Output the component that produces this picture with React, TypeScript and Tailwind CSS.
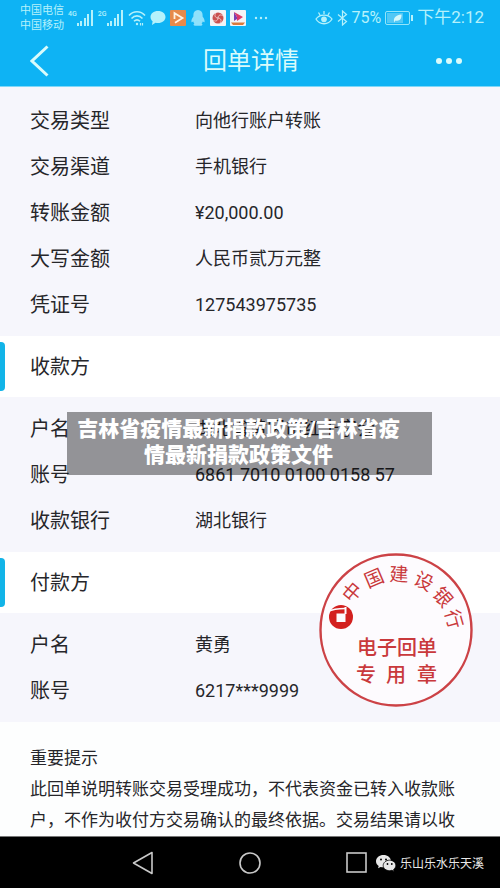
import React from "react"

interface Row {
  label: string
  value: string
}

interface SectionTitleProps {
  title: string
}

interface RowListProps {
  rows: Row[]
}

const transferRows: Row[] = [
  { label: "交易类型", value: "向他行账户转账" },
  { label: "交易渠道", value: "手机银行" },
  { label: "转账金额", value: "¥20,000.00" },
  { label: "大写金额", value: "人民币贰万元整" },
  { label: "凭证号", value: "127543975735" },
]

const payeeRows: Row[] = [
  { label: "户名", value: "湖北省黄冈市红十字会" },
  { label: "账号", value: "6861 7010 0100 0158 57" },
  { label: "收款银行", value: "湖北银行" },
]

const payerRows: Row[] = [
  { label: "户名", value: "黄勇" },
  { label: "账号", value: "6217***9999" },
]

const stampLetters = [
  { char: "中", x: 33, y: 40, angle: -50 },
  { char: "国", x: 55, y: 26, angle: -23 },
  { char: "建", x: 80, y: 22, angle: 2 },
  { char: "设", x: 105, y: 29, angle: 27 },
  { char: "银", x: 124, y: 45, angle: 50 },
  { char: "行", x: 135, y: 67, angle: 74 },
]

const SignalBars = ({ label }: { label: string }) => (
  <div className="flex items-start">
    <span className="text-[7px] leading-2 font-medium">{label}</span>
    <svg width="17" height="16" viewBox="0 0 17 16" fill="currentColor">
      <rect x="0" y="13" width="2" height="3" />
      <rect x="3" y="11" width="2" height="5" />
      <rect x="7" y="8" width="2" height="8" />
      <rect x="10" y="4" width="2" height="12" />
      <rect x="14" y="0" width="2" height="16" />
    </svg>
  </div>
)

const StatusBar = () => (
  <div className="flex h-9 items-center justify-between pr-4 pl-5 text-[#b5f1fb]">
    <div className="flex items-center gap-1">
      <div className="text-[11px] leading-[15px]">
        <p>中国电信</p>
        <p>中国移动</p>
      </div>
      <SignalBars label="4G" />
      <SignalBars label="2G" />
      <svg
        width="18"
        height="16"
        viewBox="0 0 18 16"
        fill="none"
        stroke="currentColor"
        strokeWidth="1.6"
      >
        <path d="M1 5.500C5.500.500 12.500.500 17 5.500M3.500 8.500c3.300-3.500 7.700-3.500 11 0M6 11.300c2-2 4-2 6 0" />
        <circle cx="9" cy="14" r="1.200" fill="currentColor" stroke="none" />
        <path d="M12.500 13v2.500M14.500 13v2.500" strokeWidth="1.200" />
      </svg>
      <svg width="16" height="16" viewBox="0 0 16 16" fill="currentColor">
        <path d="M8 1c4.400 0 7.500 2.600 7.500 6S12.400 13 8 13c-.9 0-1.700-.1-2.500-.3L2 15l.6-3.700C1.300 10.200.5 8.700.5 7c0-3.400 3.100-6 7.500-6z" />
      </svg>
      <svg width="16" height="16" viewBox="0 0 16 16">
        <rect width="16" height="16" rx="1" fill="#e68a4b" />
        <path
          d="M4.500 9V3.200L12.500 8 5 12.800"
          fill="none"
          stroke="#fff3e4"
          strokeWidth="1.800"
        />
      </svg>
      <svg width="16" height="16" viewBox="0 0 16 16" fill="#8fe1fb">
        <path d="M8 0c3 0 4.600 2.200 4.600 5v1.500c1.200 1.500 2.200 3.700 2 5.200-.2.900-1 .5-1.700-.4-.2.900-.7 1.700-1.300 2.300 1.500.7 1 2.200-.7 2.200H5.100c-1.700 0-2.200-1.500-.7-2.200-.6-.6-1.100-1.400-1.300-2.300-.7.900-1.500 1.300-1.700.4-.2-1.500.8-3.700 2-5.200V5C3.400 2.200 5 0 8 0z" />
      </svg>
      <svg width="16" height="16" viewBox="0 0 16 16">
        <rect width="16" height="16" rx="1" fill="#f3f4f6" />
        <circle cx="8" cy="8" r="5.500" fill="#c9504f" />
        <path
          d="M8 8c0-3 3-4 5-2M8 8c3 0 4 3 2 5M8 8c0 3-3 4-5 2M8 8C5 8 4 5 6 3"
          fill="none"
          stroke="#f6d9d9"
          strokeWidth=".8"
        />
      </svg>
      <svg width="16" height="16" viewBox="0 0 16 16">
        <rect width="16" height="16" rx="1" fill="#f3f4f6" />
        <path d="M4 2v9l3-2V7z" fill="#7c3fb0" />
        <path d="M4 2l9 5-6 4 0-4z" fill="#d93a6b" />
        <path d="M1 12.500h14L13 15H3z" fill="#d97a3c" />
      </svg>
      <svg
        className="ml-1"
        width="14"
        height="4"
        viewBox="0 0 14 4"
        fill="currentColor"
      >
        <circle cx="2" cy="2" r="1.200" />
        <circle cx="7" cy="2" r="1.200" />
        <circle cx="12" cy="2" r="1.200" />
      </svg>
    </div>
    <div className="flex items-center gap-1">
      <svg
        width="18"
        height="16"
        viewBox="0 0 18 16"
        fill="none"
        stroke="currentColor"
        strokeWidth="1.300"
      >
        <path d="M1 9c3.500-5.300 12.500-5.300 16 0-3.500 6.300-12.500 6.300-16 0zM9 1v3M3.500 2.500L5 5M14.500 2.500L13 5" />
        <circle cx="9" cy="9.300" r="2.200" fill="currentColor" />
      </svg>
      <svg
        width="11"
        height="16"
        viewBox="0 0 11 16"
        fill="none"
        stroke="currentColor"
        strokeWidth="1.200"
      >
        <path d="M1 4.500l8.500 7L5.500 15V1l4 3.500-8.500 7" />
      </svg>
      <span className="text-base">75%</span>
      <svg width="28" height="14" viewBox="0 0 28 14">
        <rect
          x=".5"
          y=".5"
          width="24"
          height="13"
          rx="1.500"
          fill="none"
          stroke="currentColor"
          opacity=".8"
        />
        <rect x="2" y="2" width="16" height="10" fill="#52c8f5" />
        <rect x="26" y="4" width="2" height="6" fill="currentColor" />
        <path
          d="M9 10.500c-.6-4 2-6.500 7.500-7 .3 4.500-2 7-6 6l-1.500 2z"
          fill="#d5f8fb"
        />
      </svg>
      <span className="text-[17px]">下午2:12</span>
    </div>
  </div>
)

const Header = () => (
  <header className="border-b border-[#7fd8f8] bg-[#0eb3f4]">
    <StatusBar />
    <div className="flex h-[50px] items-center justify-between px-[30px] text-[#d9fbfb]">
      <button aria-label="返回" className="cursor-pointer">
        <svg
          width="20"
          height="32"
          viewBox="0 0 20 32"
          fill="none"
          stroke="currentColor"
          strokeWidth="3"
        >
          <path d="M17.500 1.500L2 16l15.500 14.500" />
        </svg>
      </button>
      <h1 className="pl-4 text-2xl">回单详情</h1>
      <button aria-label="更多" className="cursor-pointer pr-2">
        <svg width="26" height="8" viewBox="0 0 26 8" fill="currentColor">
          <circle cx="3" cy="4" r="3" />
          <circle cx="13" cy="4" r="3" />
          <circle cx="23" cy="4" r="3" />
        </svg>
      </button>
    </div>
  </header>
)

const RowList = ({ rows }: RowListProps) => (
  <dl className="bg-[#f6f6fc] pt-[9px] pb-2 pl-[30px]">
    {rows.map((row) => (
      <div key={row.label} className="flex h-[46px] items-center">
        <dt className="w-[165px] shrink-0 text-xl">{row.label}</dt>
        <dd className="text-lg">{row.value}</dd>
      </div>
    ))}
  </dl>
)

const SectionTitle = ({ title }: SectionTitleProps) => (
  <div className="flex h-[61px] items-center bg-white">
    <span className="h-[49px] w-[5px] rounded-r bg-[#12b4e8]" />
    <h2 className="pl-[25px] text-xl">{title}</h2>
  </div>
)

const Stamp = () => (
  <svg
    className="absolute top-0 right-[27px]"
    width="154"
    height="156"
    viewBox="0 0 154 156"
    fill="#c9393c"
    textAnchor="middle"
  >
    <circle
      cx="77"
      cy="78"
      r="75.500"
      fill="#fdfbfe"
      stroke="#cc4246"
      strokeWidth="2.400"
    />
    {stampLetters.map(({ char, x, y, angle }) => (
      <text
        key={char}
        x="0"
        y="7"
        fontSize="19"
        transform={`translate(${x} ${y}) rotate(${angle})`}
      >
        {char}
      </text>
    ))}
    <circle cx="22" cy="65" r="12" fill="#d3201f" />
    <path
      d="M17.500 61.500h9v8.500h-9zM25.500 55h2v7h-2z"
      fill="#fdfbfe"
    />
    <path
      d="M9 59.500c5-2.500 10-3 17-3"
      fill="none"
      stroke="#fdfbfe"
      strokeWidth="1.300"
    />
    <g fontSize="20" fontWeight="500">
      <text x="78" y="103">
        电子回单
      </text>
      <text x="47" y="130">
        专
      </text>
      <text x="77" y="130">
        用
      </text>
      <text x="108" y="130">
        章
      </text>
    </g>
  </svg>
)

const NavBar = () => (
  <footer className="relative flex h-[52px] items-center justify-center gap-[85px] border-t border-[#777] bg-black text-[#c9c9c9]">
    <button aria-label="返回键" className="cursor-pointer">
      <svg
        width="22"
        height="24"
        viewBox="0 0 22 24"
        fill="none"
        stroke="currentColor"
        strokeWidth="1.600"
        strokeLinejoin="round"
      >
        <path d="M20 1.500v21L1.500 12z" />
      </svg>
    </button>
    <button aria-label="主屏幕" className="cursor-pointer">
      <svg
        width="22"
        height="24"
        viewBox="0 0 22 24"
        fill="none"
        stroke="currentColor"
        strokeWidth="1.600"
      >
        <circle cx="11" cy="12" r="10" />
      </svg>
    </button>
    <button aria-label="最近任务" className="cursor-pointer">
      <svg
        width="22"
        height="24"
        viewBox="0 0 22 24"
        fill="none"
        stroke="currentColor"
        strokeWidth="1.600"
      >
        <rect x="1" y="2" width="19" height="19" />
      </svg>
    </button>
    <div className="absolute right-4 bottom-4 flex items-center gap-1 text-[#e8e8e8]">
      <svg width="20" height="17" viewBox="0 0 20 17" fill="currentColor">
        <path d="M7.500 0C3.400 0 0 2.700 0 6.200c0 2 1 3.600 2.700 4.800L2 13.200l2.600-1.300c.9.300 1.900.4 2.900.4C11.600 12.300 15 9.700 15 6.200S11.600 0 7.500 0z" />
        <path
          d="M13.500 5.200c3.500 0 6.300 2.300 6.300 5.300 0 1.600-.9 3-2.200 4l.5 1.900-2.200-1.100c-.7.200-1.500.4-2.400.4-3.500 0-6.300-2.300-6.300-5.200s2.800-5.300 6.300-5.300z"
          stroke="#000"
          strokeWidth=".8"
        />
        <g fill="#000">
          <circle cx="5" cy="4.500" r="1" />
          <circle cx="10" cy="4.500" r="1" />
          <circle cx="11.500" cy="9" r=".9" />
          <circle cx="15.800" cy="9" r=".9" />
        </g>
      </svg>
      <span className="text-xs">乐山乐水乐天溪</span>
    </div>
  </footer>
)

const App = () => {
  return (
    <div className="flex min-h-screen flex-col bg-[#fdfefe] font-[Roboto,'Noto_Sans_CJK_SC',sans-serif] text-[#26262a]">
      <Header />
      <main className="flex-1">
        <section className="bg-[#f6f6fc] pt-0.5">
          <RowList rows={transferRows} />
        </section>
        <section className="relative">
          <SectionTitle title="收款方" />
          <RowList rows={payeeRows} />
          <div className="absolute top-[76px] right-[68px] left-[67px] bg-black/40 pt-1 pr-[22px] pb-[7px] text-center text-[21px] leading-[26px] font-black text-white">
            吉林省疫情最新捐款政策/吉林省疫情最新捐款政策文件
          </div>
        </section>
        <section className="relative">
          <SectionTitle title="付款方" />
          <RowList rows={payerRows} />
          <Stamp />
        </section>
        <section className="pt-[21px] pr-10 pl-[30px] text-[17px] leading-[31px]">
          <h3>重要提示</h3>
          <p>
            此回单说明转账交易受理成功，不代表资金已转入收款账户，不作为收付方交易确认的最终依据。交易结果请以收
          </p>
        </section>
      </main>
      <NavBar />
    </div>
  )
}

export default App
